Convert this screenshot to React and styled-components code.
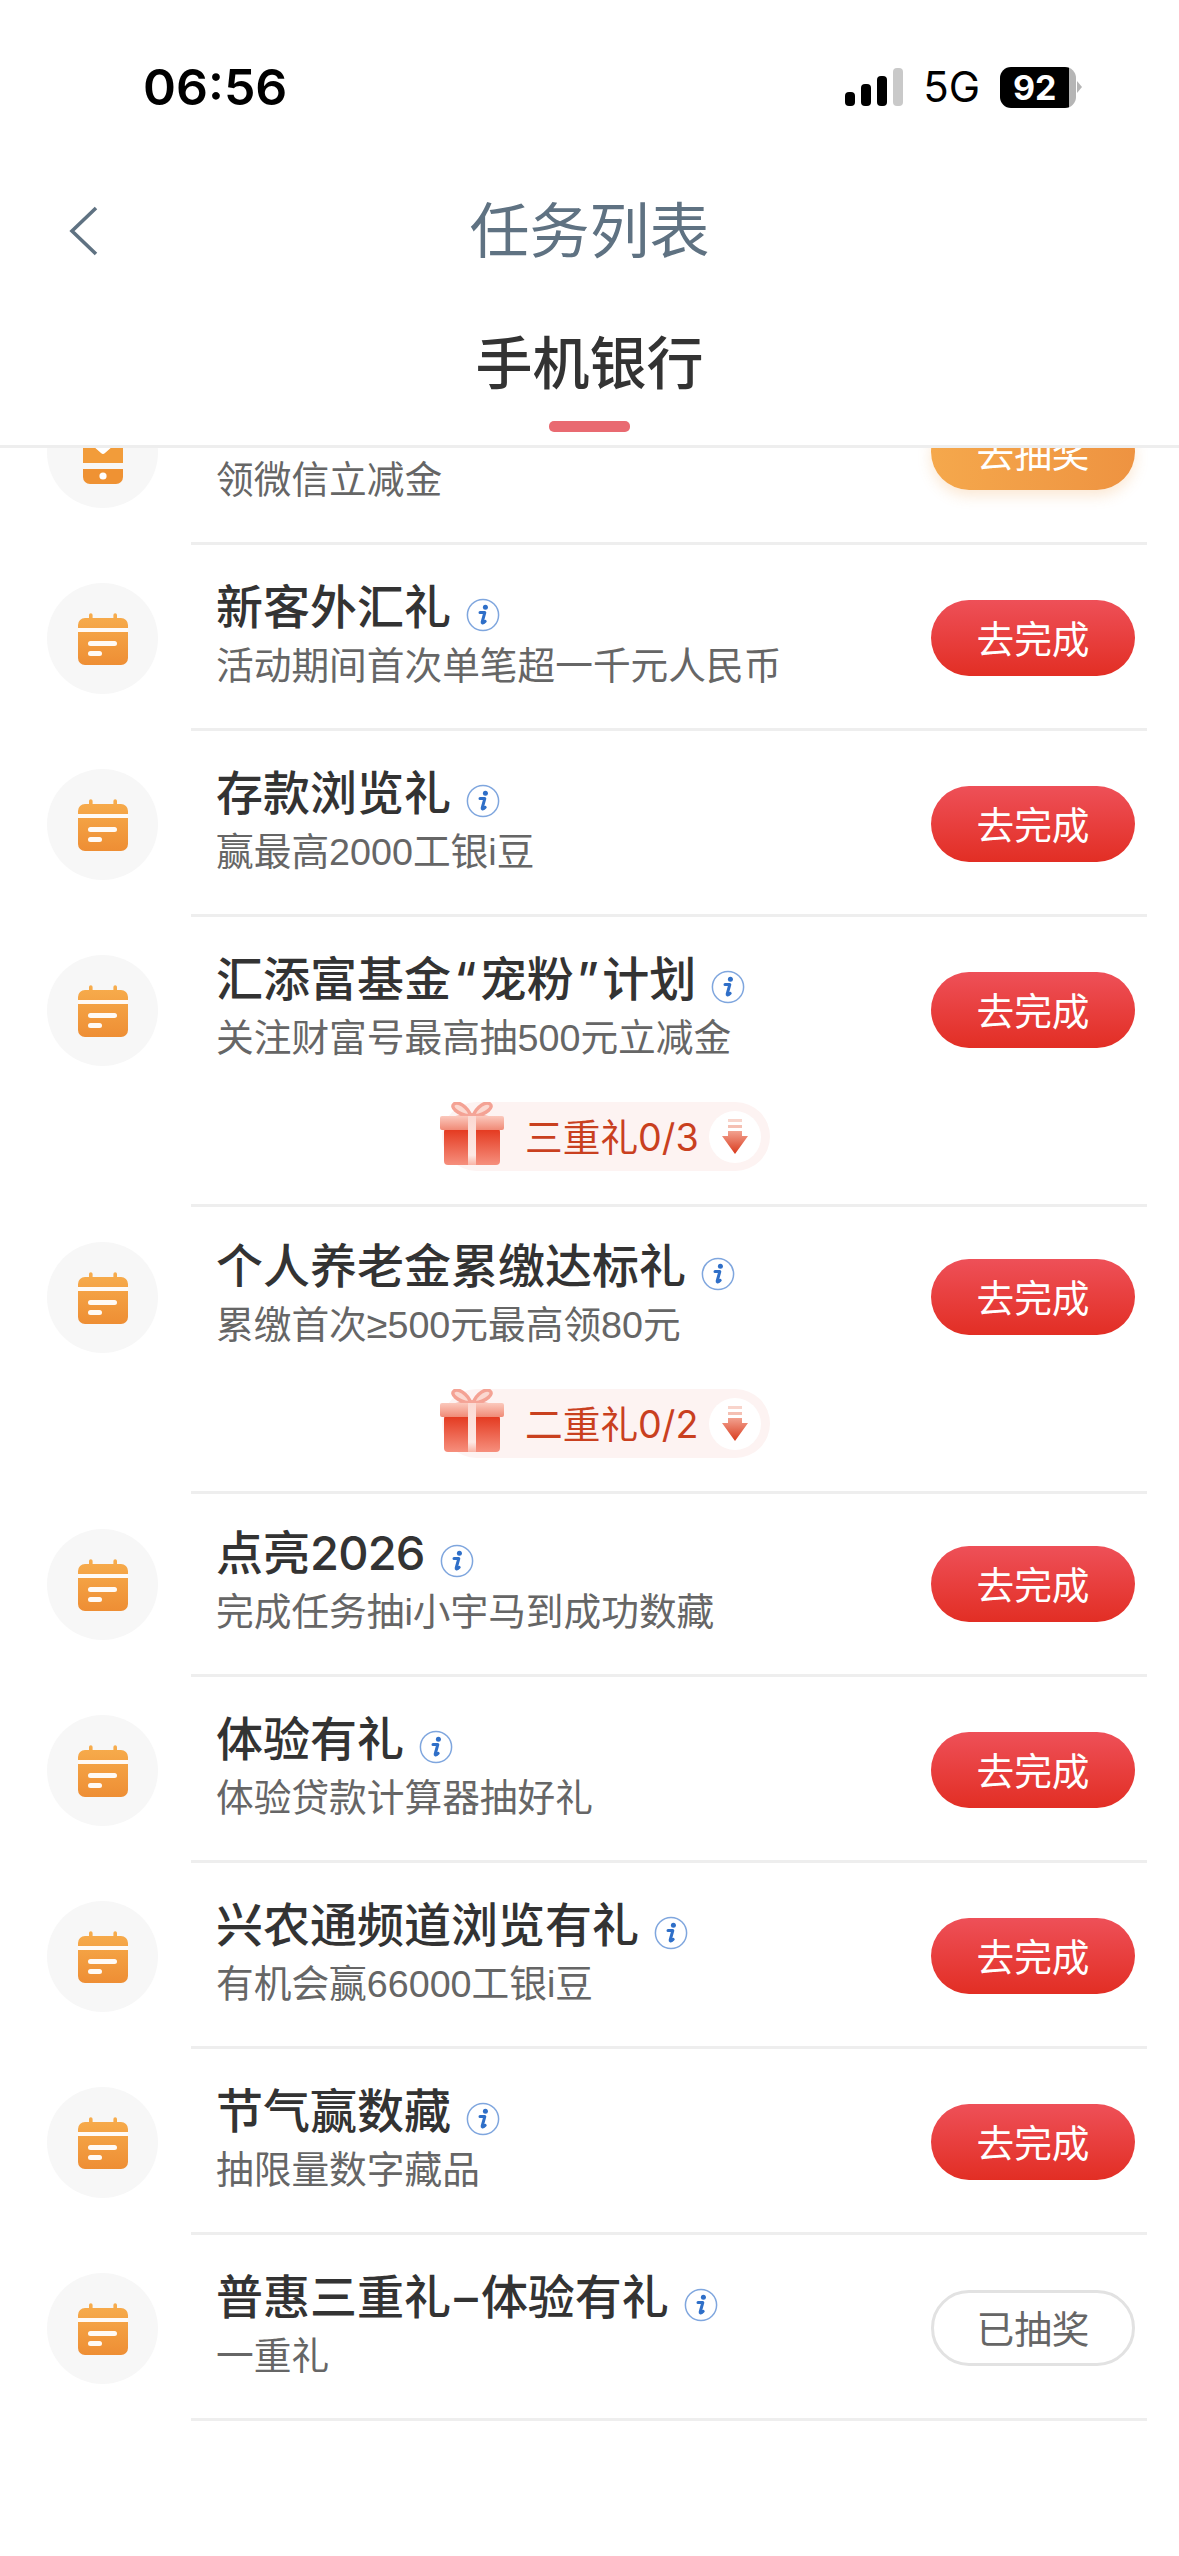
import React from 'react';
import styled, { createGlobalStyle } from 'styled-components';

const GlobalStyle = createGlobalStyle`
  html, body {
    margin: 0;
    padding: 0;
    background: #fff;
  }
  * {
    box-sizing: border-box;
  }
`;

const cjk = `"Noto Sans CJK SC", "Noto Sans", sans-serif`;

const Page = styled.div`
  width: 1179px;
  height: 2556px;
  background: #fff;
  overflow: hidden;
  display: flex;
  flex-direction: column;
  font-family: ${cjk};
`;

const Header = styled.header`
  flex: none;
  height: 448px;
  border-bottom: 3px solid #eeeeee;
  display: flex;
  flex-direction: column;
`;

const StatusBar = styled.div`
  height: 173px;
  padding: 59px 103px 0 143px;
  display: flex;
  justify-content: space-between;
  align-items: flex-start;
`;

const Time = styled.span`
  font-family: Inter, "Liberation Sans", sans-serif;
  font-weight: 600;
  font-size: 50px;
  line-height: 56px;
  color: #000;
`;

const StatusRight = styled.div`
  display: flex;
  align-items: center;
  height: 56px;
  gap: 20px;
`;

const Network = styled.span`
  font-family: Inter, "Liberation Sans", sans-serif;
  font-size: 42px;
  color: #000;
  line-height: 56px;
`;

const Battery = styled.span`
  position: relative;
  width: 76px;
  height: 41px;
  border-radius: 11px;
  background: linear-gradient(90deg, #000 91%, #b5b5b5 91%);
  color: #fff;
  font-family: Inter, "Liberation Sans", sans-serif;
  font-weight: 700;
  font-size: 34px;
  line-height: 41px;
  padding-left: 13px;

  &::after {
    content: '';
    position: absolute;
    top: 14px;
    right: -6px;
    border-left: 5px solid #b5b5b5;
    border-top: 6px solid transparent;
    border-bottom: 6px solid transparent;
  }
`;

const NavBar = styled.div`
  position: relative;
  height: 106px;
  display: flex;
  align-items: center;
  justify-content: center;
`;

const BackButton = styled.span`
  position: absolute;
  left: 68px;
  top: 33px;
  display: flex;
`;

const NavTitle = styled.h1`
  margin: 0;
  font-size: 60px;
  font-weight: 400;
  color: #5f7282;
`;

const Tab = styled.div`
  flex: 1;
  display: flex;
  flex-direction: column;
  align-items: center;
  padding-top: 45px;
`;

const TabLabel = styled.span`
  font-size: 57px;
  line-height: 70px;
  font-weight: 500;
  color: #333;
`;

const TabMark = styled.span`
  width: 81px;
  height: 11px;
  margin-top: 27px;
  border-radius: 5px;
  background: #e96a71;
`;

const Viewport = styled.main`
  flex: 1;
  overflow: hidden;
`;

const List = styled.div`
  margin-top: -89px;
  display: flex;
  flex-direction: column;
`;

const Row = styled.section`
  display: flex;
  flex-direction: column;
  padding-bottom: ${p => (p.$gift ? '36px' : '0')};
  position: relative;

  &::after {
    content: '';
    position: absolute;
    left: 191px;
    right: 32px;
    bottom: 0;
    height: 3px;
    background: #eeeeee;
  }
`;

const RowMain = styled.div`
  height: ${p => p.$h}px;
  margin-top: ${p => (p.$tight ? '-3px' : '0')};
  padding: 0 44px 0 47px;
  display: flex;
  align-items: flex-start;
`;

const IconCircle = styled.div`
  flex: none;
  width: 111px;
  height: 111px;
  margin-top: 38px;
  border-radius: 50%;
  background: #f7f7f7;
  display: flex;
  align-items: center;
  justify-content: center;
`;

const TextCol = styled.div`
  flex: 1;
  min-width: 0;
  padding: 29px 0 0 58px;
`;

const TitleLine = styled.div`
  display: flex;
  align-items: center;
  gap: 15px;
  height: 66px;
`;

const Title = styled.h2`
  margin: 0;
  font-family: Inter, ${cjk};
  font-size: 47px;
  line-height: 66px;
  font-weight: 500;
  color: #333;
  white-space: nowrap;
`;

const Punct = styled.span`
  padding: 0 3.2px;
`;

const Digits = styled.span`
  letter-spacing: -0.8px;
`;

const InfoMark = styled.span`
  display: flex;
  margin-top: 15px;
`;

const Sub = styled.p`
  margin: 0;
  font-family: "Liberation Sans", ${cjk};
  font-size: 37.7px;
  line-height: 52px;
  font-weight: 400;
  color: #666;
  white-space: nowrap;
`;

const Action = styled.span`
  flex: none;
  width: 204px;
  height: 76px;
  margin-top: 55px;
  padding-bottom: 4px;
  border-radius: 38px;
  display: flex;
  align-items: center;
  justify-content: center;
  font-size: 37.7px;
  color: ${p => (p.$kind === 'done' ? '#666' : '#fff')};
  background: ${p =>
    p.$kind === 'done'
      ? '#fff'
      : p.$kind === 'draw'
        ? 'linear-gradient(90deg, #f5a84c 0%, #ee9341 100%)'
        : 'linear-gradient(180deg, #ee5058 0%, #e22e24 100%)'};
  border: ${p => (p.$kind === 'done' ? '3px solid #e2e2e2' : 'none')};
  box-shadow: ${p => (p.$kind === 'draw' ? '0 6px 14px rgba(238, 148, 60, 0.22)' : 'none')};
`;

const GiftLine = styled.div`
  padding: 0 158px 0 191px;
  display: flex;
  justify-content: center;
`;

const GiftPill = styled.div`
  position: relative;
  height: 69px;
  width: 328px;
  padding: 0 9px 0 83px;
  display: flex;
  align-items: center;
  justify-content: space-between;
  border-radius: 35px;
  background: #fdf3f2;
  color: #c9401f;
  font-size: 37.7px;
  white-space: nowrap;
`;

const GiftText = styled.span`
  font-family: Inter, ${cjk};
  margin-bottom: 5px;
`;

const GiftBox = styled.span`
  position: absolute;
  left: -2px;
  top: 0;
  display: flex;
`;

const ArrowDot = styled.span`
  width: 52px;
  height: 52px;
  border-radius: 50%;
  background: #fff;
  display: flex;
  align-items: center;
  justify-content: center;
`;

const CalendarIcon = () => (
  <svg width="50" height="52" viewBox="0 0 50 52">
    <defs>
      <linearGradient id="calFill" x1="0" y1="0" x2="0" y2="1">
        <stop offset="0" stopColor="#f7ad4d" />
        <stop offset="1" stopColor="#ee8e34" />
      </linearGradient>
    </defs>
    <path
      d="M11 5V2a1.8 1.8 0 0 1 3.6 0v3h20.8V2a1.8 1.8 0 0 1 3.6 0v3h4a7 7 0 0 1 7 7v33a7 7 0 0 1-7 7H7a7 7 0 0 1-7-7V12a7 7 0 0 1 7-7z"
      fill="url(#calFill)"
    />
    <rect x="0" y="15" width="50" height="4" fill="#fff" opacity="0.95" />
    <rect x="10" y="28" width="29" height="5" rx="2.5" fill="#fff" opacity="0.95" />
    <rect x="10" y="38" width="14" height="5" rx="2.5" fill="#fff" opacity="0.95" />
  </svg>
);

const DrawIcon = () => (
  <svg width="40" height="62" viewBox="0 0 40 62">
    <path d="M0 6a6 6 0 0 1 6-6h28a6 6 0 0 1 6 6v35H0z" fill="#f29c3a" />
    <path d="M10 24l8 7a3 3 0 0 0 4 0l8-7z" fill="#fff" />
    <path d="M0 47h40v8a7 7 0 0 1-7 7H7a7 7 0 0 1-7-7z" fill="#ef9233" />
    <circle cx="20" cy="54" r="3.6" fill="#fff" />
  </svg>
);

const InfoIcon = () => (
  <svg width="34" height="34" viewBox="0 0 34 34">
    <circle cx="17" cy="17" r="15.6" fill="#fff" stroke="#7fa6de" strokeWidth="1.5" />
    <circle cx="19.4" cy="9.2" r="2.5" fill="#2f6fc8" />
    <path
      d="M14 14.6h4.8l-2.6 9.4c-.2.8.6 1.2 1.2.7l1.8-1.4"
      fill="none"
      stroke="#2f6fc8"
      strokeWidth="3"
      strokeLinecap="round"
      strokeLinejoin="round"
    />
  </svg>
);

const Gift = () => (
  <svg width="64" height="64" viewBox="0 0 64 64">
    <defs>
      <linearGradient id="giftBody" x1="0" y1="0" x2="0" y2="1">
        <stop offset="0" stopColor="#e3361c" />
        <stop offset="1" stopColor="#f68f7d" />
      </linearGradient>
      <linearGradient id="giftLid" x1="0" y1="0" x2="0" y2="1">
        <stop offset="0" stopColor="#fbc9bd" />
        <stop offset="1" stopColor="#f08a76" />
      </linearGradient>
      <linearGradient id="giftRibbon" x1="0" y1="0" x2="0" y2="1">
        <stop offset="0" stopColor="#fbd9d2" />
        <stop offset="0.8" stopColor="#fde9e5" />
        <stop offset="1" stopColor="#f9b4a6" />
      </linearGradient>
    </defs>
    <path
      d="M31 14C27 4 18 -1 14 2c-4 3 3 10 15 12zM33 14C37 4 46 -1 50 2c4 3-3 10-15 12z"
      fill="#fbd8d0"
      stroke="#f4a294"
      strokeWidth="3.4"
    />
    <path d="M10 15L32 11l22 4z" fill="#f5a598" />
    <rect x="4" y="26" width="56" height="37" rx="4" fill="url(#giftBody)" />
    <rect x="0" y="14" width="64" height="14" rx="2" fill="url(#giftLid)" />
    <rect x="28" y="14" width="8" height="49" fill="url(#giftRibbon)" />
  </svg>
);

const DownArrow = () => (
  <svg width="26" height="35" viewBox="0 0 26 35">
    <defs>
      <linearGradient id="arrowFill" x1="0" y1="0" x2="0" y2="1">
        <stop offset="0" stopColor="#f2a18f" />
        <stop offset="1" stopColor="#d93a1c" />
      </linearGradient>
    </defs>
    <rect x="6" y="0" width="14" height="3" fill="#f8d4cb" />
    <rect x="6" y="6" width="14" height="3" fill="#f5c0b3" />
    <path d="M6 12h14v5h6L13 35 0 17h6z" fill="url(#arrowFill)" />
  </svg>
);

const tasks = [
  { title: '\u00a0', sub: '领微信立减金', action: '去抽奖', kind: 'draw', icon: 'draw', noInfo: true },
  { title: '新客外汇礼', sub: '活动期间首次单笔超一千元人民币' },
  { title: '存款浏览礼', sub: '赢最高2000工银i豆' },
  {
    title: (
      <>
        汇添富基金<Punct>“</Punct>宠粉<Punct>”</Punct>计划
      </>
    ),
    sub: '关注财富号最高抽500元立减金',
    gift: '三重礼0/3',
    h: 185,
  },
  { title: '个人养老金累缴达标礼', sub: '累缴首次≥500元最高领80元', gift: '二重礼0/2', h: 185, tight: true },
  {
    title: (
      <>
        点亮<Digits>2026</Digits>
      </>
    ),
    sub: '完成任务抽i小宇马到成功数藏',
    tight: true,
  },
  { title: '体验有礼', sub: '体验贷款计算器抽好礼' },
  { title: '兴农通频道浏览有礼', sub: '有机会赢66000工银i豆' },
  { title: '节气赢数藏', sub: '抽限量数字藏品' },
  {
    title: (
      <>
        普惠三重礼<Punct>–</Punct>体验有礼
      </>
    ),
    sub: '一重礼',
    action: '已抽奖',
    kind: 'done',
  },
];

const App = () => {
  return (
    <Page>
      <GlobalStyle />
      <Header>
        <StatusBar>
          <Time>06:56</Time>
          <StatusRight>
            <svg width="58" height="38" viewBox="0 0 58 38">
              <rect x="0" y="24" width="10" height="14" rx="4" fill="#000" />
              <rect x="16" y="16" width="10" height="22" rx="4" fill="#000" />
              <rect x="32" y="8" width="10" height="30" rx="4" fill="#000" />
              <rect x="48" y="0" width="10" height="38" rx="4" fill="#c9c9c9" />
            </svg>
            <Network>5G</Network>
            <Battery>92</Battery>
          </StatusRight>
        </StatusBar>
        <NavBar>
          <BackButton>
            <svg width="32" height="50" viewBox="0 0 32 50">
              <path d="M28 2L4 25l24 23" fill="none" stroke="#5f7282" strokeWidth="3.6" />
            </svg>
          </BackButton>
          <NavTitle>任务列表</NavTitle>
        </NavBar>
        <Tab>
          <TabLabel>手机银行</TabLabel>
          <TabMark />
        </Tab>
      </Header>
      <Viewport>
        <List>
          {tasks.map((t, i) => (
            <Row key={i} $gift={!!t.gift}>
              <RowMain $h={t.h || 186} $tight={t.tight}>
                <IconCircle>{t.icon === 'draw' ? <DrawIcon /> : <CalendarIcon />}</IconCircle>
                <TextCol>
                  <TitleLine>
                    <Title>{t.title}</Title>
                    {!t.noInfo && (
                      <InfoMark>
                        <InfoIcon />
                      </InfoMark>
                    )}
                  </TitleLine>
                  <Sub>{t.sub}</Sub>
                </TextCol>
                <Action $kind={t.kind}>{t.action || '去完成'}</Action>
              </RowMain>
              {t.gift && (
                <GiftLine>
                  <GiftPill>
                    <GiftBox>
                      <Gift />
                    </GiftBox>
                    <GiftText>{t.gift}</GiftText>
                    <ArrowDot>
                      <DownArrow />
                    </ArrowDot>
                  </GiftPill>
                </GiftLine>
              )}
            </Row>
          ))}
        </List>
      </Viewport>
    </Page>
  );
};

export default App;
